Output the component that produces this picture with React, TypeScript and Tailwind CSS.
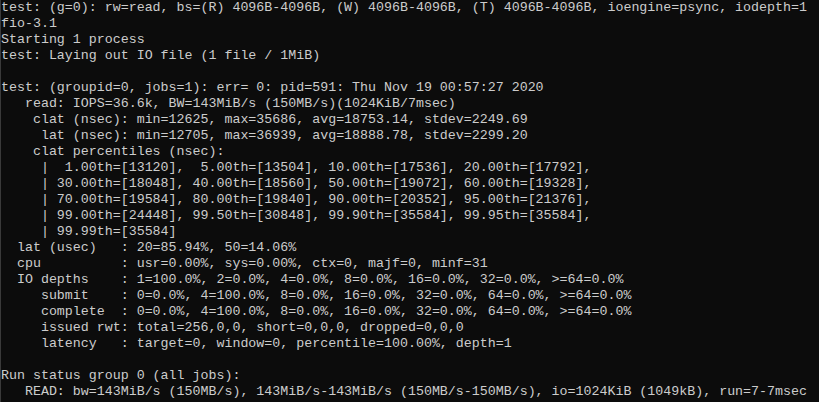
const LINES = [
  'test: (g=0): rw=read, bs=(R) 4096B-4096B, (W) 4096B-4096B, (T) 4096B-4096B, ioengine=psync, iodepth=1',
  'fio-3.1',
  'Starting 1 process',
  'test: Laying out IO file (1 file / 1MiB)',
  '',
  'test: (groupid=0, jobs=1): err= 0: pid=591: Thu Nov 19 00:57:27 2020',
  '   read: IOPS=36.6k, BW=143MiB/s (150MB/s)(1024KiB/7msec)',
  '    clat (nsec): min=12625, max=35686, avg=18753.14, stdev=2249.69',
  '     lat (nsec): min=12705, max=36939, avg=18888.78, stdev=2299.20',
  '    clat percentiles (nsec):',
  '     |  1.00th=[13120],  5.00th=[13504], 10.00th=[17536], 20.00th=[17792],',
  '     | 30.00th=[18048], 40.00th=[18560], 50.00th=[19072], 60.00th=[19328],',
  '     | 70.00th=[19584], 80.00th=[19840], 90.00th=[20352], 95.00th=[21376],',
  '     | 99.00th=[24448], 99.50th=[30848], 99.90th=[35584], 99.95th=[35584],',
  '     | 99.99th=[35584]',
  '  lat (usec)   : 20=85.94%, 50=14.06%',
  '  cpu          : usr=0.00%, sys=0.00%, ctx=0, majf=0, minf=31',
  '  IO depths    : 1=100.0%, 2=0.0%, 4=0.0%, 8=0.0%, 16=0.0%, 32=0.0%, >=64=0.0%',
  '     submit    : 0=0.0%, 4=100.0%, 8=0.0%, 16=0.0%, 32=0.0%, 64=0.0%, >=64=0.0%',
  '     complete  : 0=0.0%, 4=100.0%, 8=0.0%, 16=0.0%, 32=0.0%, 64=0.0%, >=64=0.0%',
  '     issued rwt: total=256,0,0, short=0,0,0, dropped=0,0,0',
  '     latency   : target=0, window=0, percentile=100.00%, depth=1',
  '',
  'Run status group 0 (all jobs):',
  '   READ: bw=143MiB/s (150MB/s), 143MiB/s-143MiB/s (150MB/s-150MB/s), io=1024KiB (1049kB), run=7-7msec',
]

export default function App() {
  return (
    <div className="w-[819px] h-[402px] overflow-hidden bg-[#0c0c0c] border-l border-[#3a3a3a]">
      {/* вывод fio в консоли */}
      <pre className="m-0 text-[#cccccc] text-[13.3px] leading-[16px] font-['Liberation_Mono','DejaVu_Sans_Mono',monospace] whitespace-pre">
        {LINES.map((line, i) => (
          <div key={i} className="h-[16px]">
            {line}
          </div>
        ))}
      </pre>
    </div>
  )
}
